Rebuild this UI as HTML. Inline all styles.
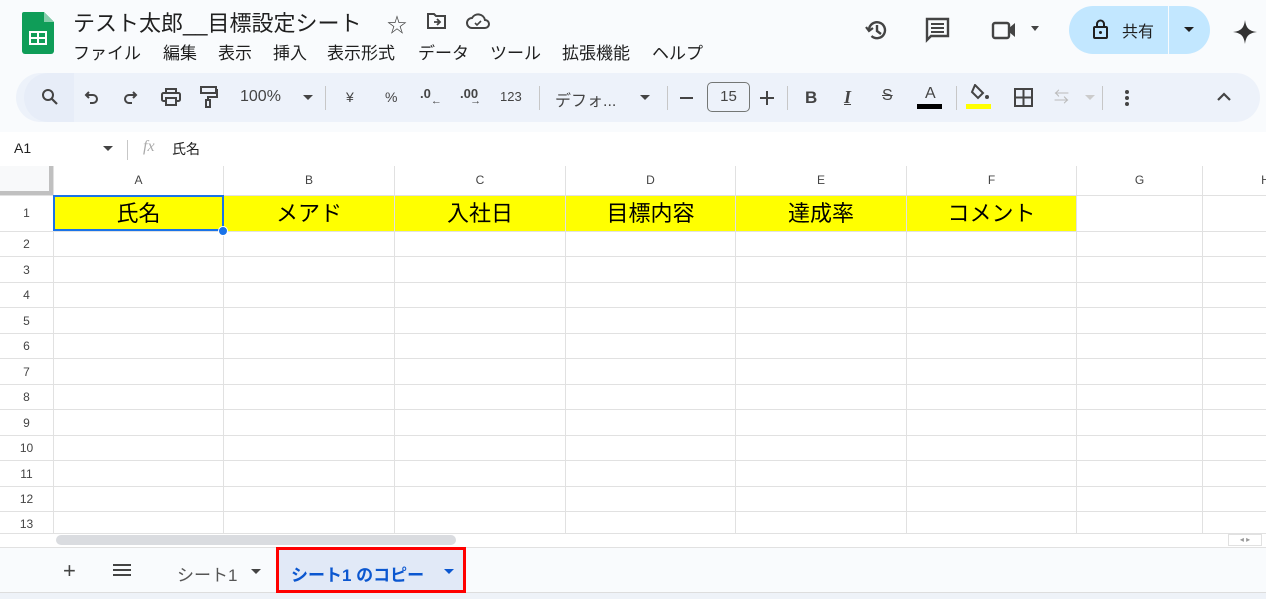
<!DOCTYPE html><html><head><meta charset="utf-8"><style>
*{margin:0;padding:0;box-sizing:border-box}
body{width:1266px;height:599px;overflow:hidden;background:#f9fbfd;font-family:"Liberation Sans","Noto Sans CJK JP",sans-serif;color:#1f1f1f;position:relative}
.a{position:absolute}
.t{font-size:13px;color:#444}
.ic{position:absolute;color:#444;font-size:16px}
.vl{position:absolute;width:1px;background:#e1e1e1}
.hl{position:absolute;height:1px;background:#e1e1e1}
.rn{position:absolute;left:0;width:53px;text-align:center;font-size:12px;color:#444}
.ch{position:absolute;top:166px;height:29px;line-height:29px;text-align:center;font-size:12px;color:#444}
.c1{position:absolute;top:196px;height:35px;line-height:35px;text-align:center;font-size:22px;color:#000}
.m{position:absolute;top:39px;font-size:17px;color:#1f1f1f}
</style></head><body>
<svg class="a" style="left:22px;top:12px" width="32" height="42" viewBox="0 0 32 42"><path d="M2 0h20l10 10v29a3 3 0 0 1-3 3H3a3 3 0 0 1-3-3V2a2 2 0 0 1 2-2z" fill="#0f9d58"/><path d="M22 0v10h10z" fill="#87ceac"/><rect x="7" y="19" width="18" height="14" fill="#fff"/><rect x="9" y="21" width="6" height="4" fill="#0f9d58"/><rect x="17" y="21" width="6" height="4" fill="#0f9d58"/><rect x="9" y="27" width="6" height="4" fill="#0f9d58"/><rect x="17" y="27" width="6" height="4" fill="#0f9d58"/></svg>
<div class="a" style="left:73px;top:6px;font-size:22px;color:#1f1f1f;white-space:nowrap">テスト太郎__目標設定シート</div>
<div class="a" style="left:387px;top:9px;font-size:20px;color:#444">☆</div>
<svg class="a" style="left:426px;top:12px" width="22" height="18" viewBox="0 0 22 18"><path d="M2 2h6l2 2h9v12H2z" fill="none" stroke="#444" stroke-width="2"/><path d="M8 10h6M11 7l3 3-3 3" fill="none" stroke="#444" stroke-width="1.8"/></svg>
<svg class="a" style="left:466px;top:12px" width="24" height="18" viewBox="0 0 24 18"><path d="M6 16a5 5 0 0 1 0-10 7 7 0 0 1 13 2 4 4 0 0 1 0 8z" fill="none" stroke="#444" stroke-width="2"/><path d="M9 11l2 2 4-4" fill="none" stroke="#444" stroke-width="1.6"/></svg>
<div class="m" style="left:73px">ファイル</div>
<div class="m" style="left:163px">編集</div>
<div class="m" style="left:218px">表示</div>
<div class="m" style="left:273px">挿入</div>
<div class="m" style="left:327px">表示形式</div>
<div class="m" style="left:418px">データ</div>
<div class="m" style="left:490px">ツール</div>
<div class="m" style="left:562px">拡張機能</div>
<div class="m" style="left:652px">ヘルプ</div>
<svg class="a" style="left:864px;top:17px" width="26" height="26" viewBox="0 0 26 26"><path d="M5 13a8 8 0 1 1 2.5 6" fill="none" stroke="#444" stroke-width="2.4"/><path d="M2 10l3 4 4-3" fill="none" stroke="#444" stroke-width="2.2"/><path d="M13 8v6l4 3" fill="none" stroke="#444" stroke-width="2.4"/></svg>
<svg class="a" style="left:925px;top:17px" width="26" height="26" viewBox="0 0 26 26"><path d="M2 2h21v17H6l-4 4z" fill="none" stroke="#444" stroke-width="2.4"/><path d="M6 7h13M6 11h13M6 15h13" stroke="#444" stroke-width="2"/></svg>
<svg class="a" style="left:991px;top:20px" width="30" height="20" viewBox="0 0 30 20"><rect x="2" y="3" width="16" height="15" rx="2" fill="none" stroke="#444" stroke-width="2.4"/><path d="M18 8l6-5v14l-6-5z" fill="#444"/></svg>
<div class="a" style="left:1031px;top:26px;border:4px solid transparent;border-top:5px solid #444"></div>
<div class="a" style="left:1069px;top:6px;width:141px;height:48px;border-radius:24px;background:#c2e7ff"></div>
<div class="a" style="left:1168px;top:6px;width:1px;height:48px;background:#f9fbfd"></div>
<svg class="a" style="left:1092px;top:19px" width="18" height="20" viewBox="0 0 18 20"><rect x="2" y="8" width="13" height="11" rx="1" fill="none" stroke="#1f1f1f" stroke-width="2"/><path d="M5 8V5a3.5 3.5 0 0 1 7 0v3" fill="none" stroke="#1f1f1f" stroke-width="2"/><circle cx="8.5" cy="13.5" r="1.5" fill="#1f1f1f"/></svg>
<div class="a" style="left:1122px;top:18px;font-size:16px;color:#1f1f1f">共有</div>
<div class="a" style="left:1184px;top:27px;border:5px solid transparent;border-top:5px solid #1f1f1f"></div>
<svg class="a" style="left:1233px;top:20px" width="24" height="24" viewBox="0 0 24 24"><path d="M12 0C13 7 15 11 24 12 15 13 13 17 12 24 11 17 9 13 0 12 9 11 11 7 12 0z" fill="#333"/></svg>
<div class="a" style="left:16px;top:73px;width:1244px;height:49px;border-radius:25px;background:#edf2fa"></div>
<div class="a" style="left:24px;top:73px;width:50px;height:49px;background:#e7edf8;border-radius:25px 0 0 25px"></div>
<svg class="a" style="left:41px;top:88px" width="18" height="18" viewBox="0 0 18 18"><circle cx="7" cy="7" r="5" fill="none" stroke="#444" stroke-width="2"/><path d="M11 11l5 5" stroke="#444" stroke-width="2.2"/></svg>
<svg class="a" style="left:84px;top:89px" width="16" height="16" viewBox="0 0 16 16"><path d="M5 3L2 6l3 3" fill="none" stroke="#444" stroke-width="2"/><path d="M2 6h7a4 4 0 0 1 0 8H6" fill="none" stroke="#444" stroke-width="2"/></svg>
<svg class="a" style="left:122px;top:89px" width="16" height="16" viewBox="0 0 16 16"><path d="M11 3l3 3-3 3" fill="none" stroke="#444" stroke-width="2"/><path d="M14 6H7a4 4 0 0 0 0 8h3" fill="none" stroke="#444" stroke-width="2"/></svg>
<svg class="a" style="left:161px;top:88px" width="20" height="18" viewBox="0 0 20 18"><rect x="5" y="1" width="10" height="4" fill="none" stroke="#444" stroke-width="2"/><rect x="1" y="5" width="18" height="8" rx="1.5" fill="none" stroke="#444" stroke-width="2"/><rect x="5" y="10" width="10" height="7" fill="#edf2fa" stroke="#444" stroke-width="2"/></svg>
<svg class="a" style="left:200px;top:86px" width="18" height="22" viewBox="0 0 18 22"><rect x="1" y="1" width="15" height="6" fill="none" stroke="#444" stroke-width="2"/><path d="M16 4h1v7H8v3" fill="none" stroke="#444" stroke-width="2"/><rect x="6" y="14" width="4" height="7" fill="none" stroke="#444" stroke-width="2"/></svg>
<div class="a t" style="left:240px;top:88px;font-size:16px">100%</div>
<div class="a" style="left:303px;top:95px;border:5px solid transparent;border-top:5px solid #444"></div>
<div class="a" style="left:325px;top:86px;width:1px;height:24px;background:#c7c7c7"></div>
<div class="a t" style="left:346px;top:89px;font-size:14px">¥</div>
<div class="a t" style="left:385px;top:89px;font-size:14px">%</div>
<div class="a t" style="left:420px;top:86px;font-size:13px;font-weight:bold">.0<span style="font-size:11px;position:relative;top:6px">←</span></div>
<div class="a t" style="left:460px;top:86px;font-size:13px;font-weight:bold">.00<span style="font-size:11px;position:relative;top:6px;left:-8px">→</span></div>
<div class="a t" style="left:500px;top:89px;font-size:13px">123</div>
<div class="a" style="left:539px;top:86px;width:1px;height:24px;background:#c7c7c7"></div>
<div class="a t" style="left:555px;top:87px;font-size:16px">デフォ...</div>
<div class="a" style="left:640px;top:95px;border:5px solid transparent;border-top:5px solid #444"></div>
<div class="a" style="left:667px;top:86px;width:1px;height:24px;background:#c7c7c7"></div>
<div class="a" style="left:680px;top:97px;width:13px;height:2px;background:#444"></div>
<div class="a" style="left:707px;top:82px;width:43px;height:30px;border:1px solid #747775;border-radius:5px;text-align:center;line-height:28px;font-size:15px;color:#444">15</div>
<div class="a" style="left:760px;top:97px;width:14px;height:2px;background:#444"></div>
<div class="a" style="left:766px;top:91px;width:2px;height:14px;background:#444"></div>
<div class="a" style="left:787px;top:86px;width:1px;height:24px;background:#c7c7c7"></div>
<div class="a t" style="left:805px;top:88px;font-size:17px;font-weight:bold">B</div>
<div class="a t" style="left:844px;top:87px;font-size:18px;font-style:italic;font-family:'Liberation Serif',serif;font-weight:bold;text-decoration:underline">I</div>
<div class="a t" style="left:882px;top:87px;font-size:16px;text-decoration:line-through">S</div>
<div class="a t" style="left:925px;top:85px;font-size:16px">A</div>
<div class="a" style="left:917px;top:104px;width:25px;height:5px;background:#000"></div>
<div class="a" style="left:956px;top:86px;width:1px;height:24px;background:#c7c7c7"></div>
<svg class="a" style="left:970px;top:84px" width="22" height="18" viewBox="0 0 22 18"><path d="M5 1l8 8-5 5-6-6z" fill="none" stroke="#444" stroke-width="2"/><circle cx="17" cy="13" r="2" fill="#444"/></svg>
<div class="a" style="left:966px;top:104px;width:25px;height:5px;background:#ff0"></div>
<svg class="a" style="left:1014px;top:88px" width="19" height="19" viewBox="0 0 19 19"><rect x="1" y="1" width="17" height="17" fill="none" stroke="#444" stroke-width="2"/><path d="M9.5 1v17M1 9.5h17" stroke="#444" stroke-width="2"/></svg>
<div class="a" style="left:1054px;top:86px;font-size:15px;color:#bbb">⇆</div>
<div class="a" style="left:1085px;top:95px;border:5px solid transparent;border-top:5px solid #ccc"></div>
<div class="a" style="left:1102px;top:86px;width:1px;height:24px;background:#c7c7c7"></div>
<div class="a" style="left:1125px;top:90px;width:4px;height:4px;border-radius:2px;background:#444;box-shadow:0 6px #444,0 12px #444"></div>
<svg class="a" style="left:1216px;top:92px" width="16" height="10" viewBox="0 0 16 10"><path d="M2 8l6-6 6 6" fill="none" stroke="#444" stroke-width="2.2"/></svg>
<div class="a" style="left:0;top:132px;width:1266px;height:34px;background:#fff"></div>
<div class="a" style="left:14px;top:140px;font-size:14px">A1</div>
<div class="a" style="left:103px;top:146px;border:5px solid transparent;border-top:5px solid #444"></div>
<div class="a" style="left:127px;top:140px;width:1px;height:20px;background:#c7c7c7"></div>
<div class="a" style="left:143px;top:138px;font-size:16px;font-style:italic;color:#aaa;font-family:'Liberation Serif',serif">fx</div>
<div class="a" style="left:172px;top:139px;font-size:14px">氏名</div>
<div class="a" style="left:0;top:166px;width:1266px;height:381px;background:#fff"></div>
<div class="a" style="left:0;top:166px;width:53px;height:29px;background:#f8f9fa;border-right:4px solid #c0c0c0;border-bottom:4px solid #c0c0c0"></div>
<div class="a" style="left:54px;top:196px;width:1022px;height:35px;background:#ffff00"></div>
<div class="vl" style="left:53px;top:166px;height:367px"></div>
<div class="vl" style="left:223px;top:166px;height:367px"></div>
<div class="vl" style="left:394px;top:166px;height:367px"></div>
<div class="vl" style="left:565px;top:166px;height:367px"></div>
<div class="vl" style="left:735px;top:166px;height:367px"></div>
<div class="vl" style="left:906px;top:166px;height:367px"></div>
<div class="vl" style="left:1076px;top:166px;height:367px"></div>
<div class="vl" style="left:1202px;top:166px;height:367px"></div>
<div class="hl" style="left:0;top:195px;width:1266px"></div>
<div class="hl" style="left:0;top:231px;width:1266px"></div>
<div class="hl" style="left:0;top:256px;width:1266px"></div>
<div class="hl" style="left:0;top:282px;width:1266px"></div>
<div class="hl" style="left:0;top:307px;width:1266px"></div>
<div class="hl" style="left:0;top:333px;width:1266px"></div>
<div class="hl" style="left:0;top:358px;width:1266px"></div>
<div class="hl" style="left:0;top:384px;width:1266px"></div>
<div class="hl" style="left:0;top:409px;width:1266px"></div>
<div class="hl" style="left:0;top:435px;width:1266px"></div>
<div class="hl" style="left:0;top:460px;width:1266px"></div>
<div class="hl" style="left:0;top:486px;width:1266px"></div>
<div class="hl" style="left:0;top:511px;width:1266px"></div>
<div class="hl" style="left:0;top:533px;width:1266px"></div>
<div class="ch" style="left:54px;width:169px">A</div>
<div class="ch" style="left:224px;width:170px">B</div>
<div class="ch" style="left:395px;width:170px">C</div>
<div class="ch" style="left:566px;width:169px">D</div>
<div class="ch" style="left:736px;width:170px">E</div>
<div class="ch" style="left:907px;width:169px">F</div>
<div class="ch" style="left:1077px;width:125px">G</div>
<div class="ch" style="left:1203px;width:125px">H</div>
<div class="c1" style="left:54px;width:169px">氏名</div>
<div class="c1" style="left:224px;width:170px">メアド</div>
<div class="c1" style="left:395px;width:170px">入社日</div>
<div class="c1" style="left:566px;width:169px">目標内容</div>
<div class="c1" style="left:736px;width:170px">達成率</div>
<div class="c1" style="left:907px;width:169px">コメント</div>
<div class="a" style="left:53px;top:195px;width:171px;height:36px;border:2px solid #1a73e8"></div>
<div class="a" style="left:218px;top:226px;width:10px;height:10px;border-radius:5px;background:#1a73e8;border:1px solid #fff"></div>
<div class="rn" style="top:206px">1</div>
<div class="rn" style="top:237px">2</div>
<div class="rn" style="top:263px">3</div>
<div class="rn" style="top:288px">4</div>
<div class="rn" style="top:314px">5</div>
<div class="rn" style="top:339px">6</div>
<div class="rn" style="top:365px">7</div>
<div class="rn" style="top:390px">8</div>
<div class="rn" style="top:416px">9</div>
<div class="rn" style="top:441px">10</div>
<div class="rn" style="top:467px">11</div>
<div class="rn" style="top:492px">12</div>
<div class="rn" style="top:517px">13</div>
<div class="a" style="left:56px;top:535px;width:400px;height:10px;border-radius:5px;background:#dadce0"></div>
<div class="a" style="left:1228px;top:534px;width:34px;height:12px;border:1px solid #e1e1e1;font-size:8px;color:#999;text-align:center">◂ ▸</div>
<div class="a" style="left:0;top:547px;width:1266px;height:52px;background:#f9fbfd;border-top:1px solid #e1e1e1"></div>
<div class="a" style="left:0;top:592px;width:1266px;height:7px;background:#eef2f8;border-top:1px solid #ddd"></div>
<div class="a" style="left:63px;top:558px;font-size:22px;color:#444">+</div>
<div class="a" style="left:113px;top:564px;width:18px;height:2px;background:#444;box-shadow:0 5px #444,0 10px #444"></div>
<div class="a" style="left:177px;top:561px;font-size:17px;color:#555">シート1</div>
<div class="a" style="left:251px;top:569px;border:5px solid transparent;border-top:5px solid #444"></div>
<div class="a" style="left:276px;top:547px;width:190px;height:46px;border:3px solid #f00;background:#e1e9f7"></div>
<div class="a" style="left:291px;top:561px;font-size:17px;color:#0b57d0;font-weight:bold">シート1 のコピー</div>
<div class="a" style="left:444px;top:569px;border:5px solid transparent;border-top:5px solid #0b57d0"></div>
</body></html>
